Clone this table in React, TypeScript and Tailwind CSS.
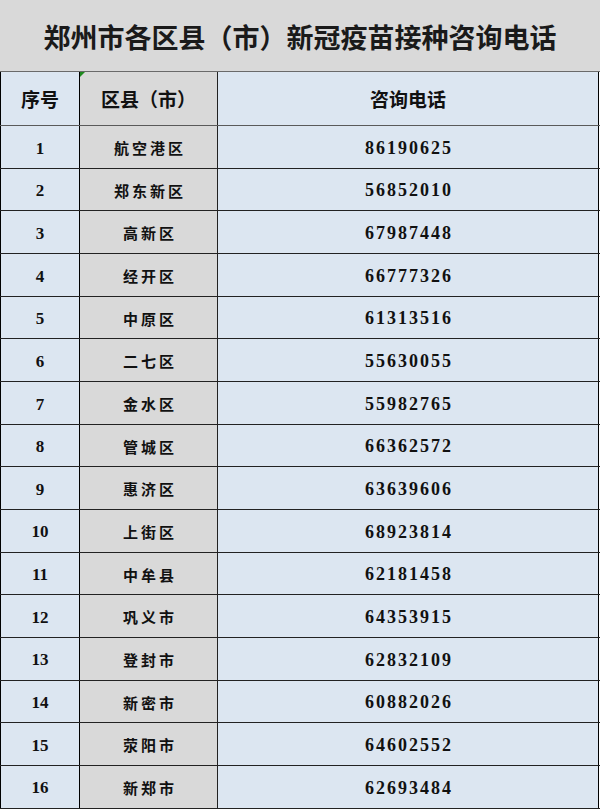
import React from 'react';

const rows: [string, string][] = [
    ['航空港区', '86190625'],
    ['郑东新区', '56852010'],
    ['高新区', '67987448'],
    ['经开区', '66777326'],
    ['中原区', '61313516'],
    ['二七区', '55630055'],
    ['金水区', '55982765'],
    ['管城区', '66362572'],
    ['惠济区', '63639606'],
    ['上街区', '68923814'],
    ['中牟县', '62181458'],
    ['巩义市', '64353915'],
    ['登封市', '62832109'],
    ['新密市', '60882026'],
    ['荥阳市', '64602552'],
    ['新郑市', '62693484'],
];

const cjk = "font-['Noto_Sans_CJK_SC',sans-serif]";
const serif = "font-['Liberation_Serif','Noto_Sans_CJK_SC',serif]";

export default function App() {
    return (
        <div className="w-[600px] h-[810px] bg-white overflow-hidden text-[#111]">
            {/* Title */}
            <div className={`h-[71px] bg-[#d9d9d9] flex items-center justify-center pt-[4px] ${cjk}`}>
                <span className="text-[27px] font-bold text-[#1a1a1a]">郑州市各区县（市）新冠疫苗接种咨询电话</span>
            </div>

            {/* Header */}
            <div className={`flex h-[55px] border-t border-b border-t-[#6a6a6a] border-b-[#5a5a5a] ${cjk}`}>
                <div className="w-[80px] bg-[#dce6f1] border-l border-r border-black flex items-center justify-center text-[19px] font-bold pt-[1px]">
                    序号
                </div>
                <div className="relative w-[138px] bg-[#d9d9d9] border-r border-[#222] flex items-center justify-center text-[19px] font-bold pt-[1px]">
                    <span className="absolute left-0 top-0 w-0 h-0 border-t-[5px] border-r-[5px] border-t-[#1e8a1e] border-r-transparent" />
                    区县（市）
                </div>
                <div className="w-[381px] bg-[#dce6f1] border-r border-black flex items-center justify-center text-[19px] font-bold pt-[1px]">
                    咨询电话
                </div>
            </div>

            {/* Rows */}
            {rows.map(([name, phone], i) => (
                <div key={i} className="flex h-[42.67px] border-b border-[#222]">
                    <div className={`w-[80px] bg-[#dce6f1] border-l border-r border-black flex items-center justify-center pt-[3px] text-[17px] font-bold ${serif}`}>
                        {i + 1}
                    </div>
                    <div className={`w-[138px] bg-[#d9d9d9] border-r border-[#222] flex items-center justify-center pt-[3px] text-[15px] font-bold tracking-[3px] pl-[3px] ${cjk}`}>
                        {name}
                    </div>
                    <div className={`w-[381px] bg-[#dce6f1] border-r border-black flex items-center justify-center pt-[3px] text-[18px] font-bold tracking-[2px] pl-[2px] ${serif}`}>
                        {phone}
                    </div>
                </div>
            ))}
        </div>
    );
}
